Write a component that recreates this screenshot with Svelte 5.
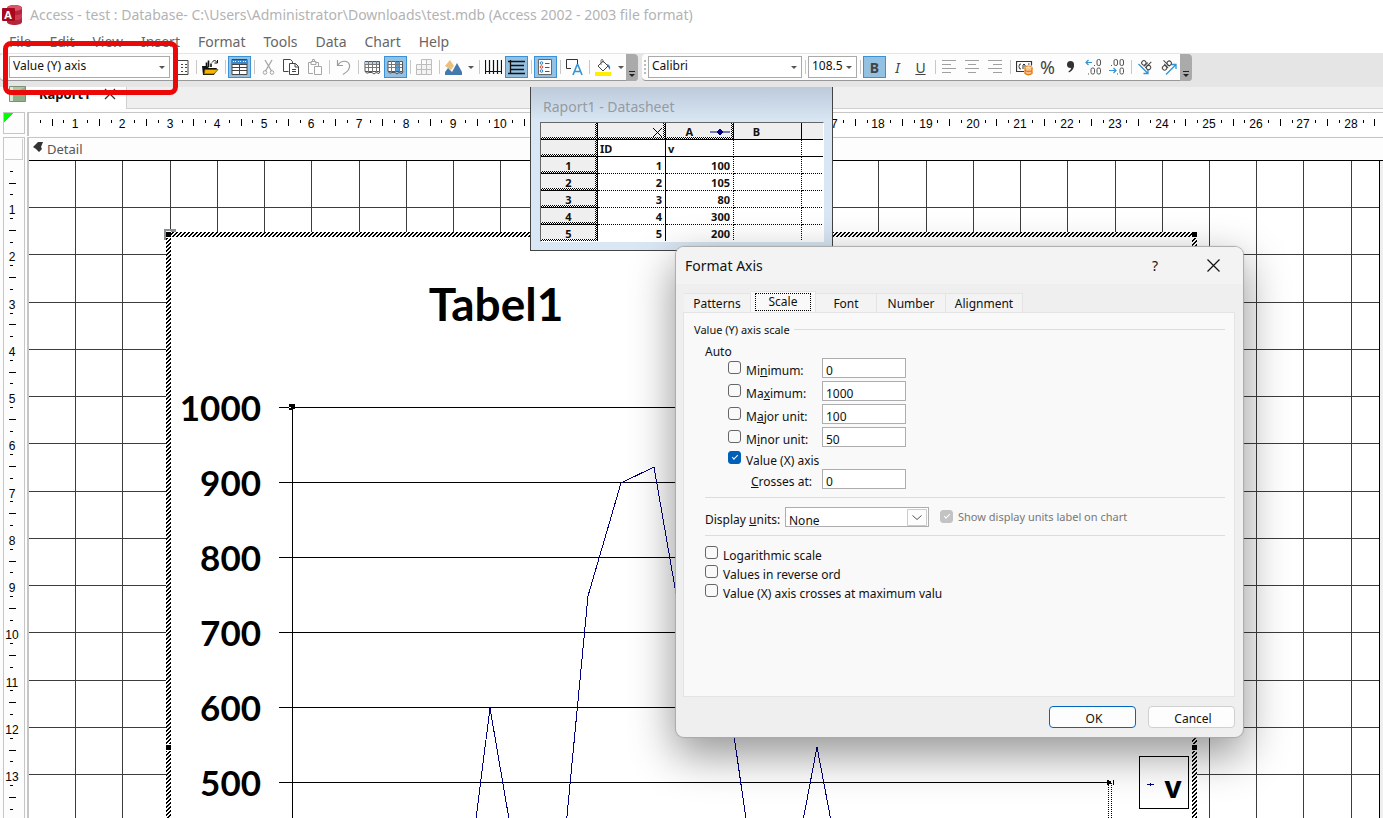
<script>
  const menu = ["File", "Edit", "View", "Insert", "Format", "Tools", "Data", "Chart", "Help"];

  // svg content of the toolbar icons, 17 x 17
  const icons = {
    properties: `<path d="M1 1.500h14v14H1M8 5.500h2M12 5.500h2M8 8.500h2M12 8.500h2M8 12.500h2M12 12.500h2" stroke="#444" fill="none"/>`,
    importFile: `<path d="M0 7h5l2 2h8l-3 7H1z" fill="#111"/><path d="M3 10.500h13L12 15H2z" fill="#f4b400" stroke="#6b4700" stroke-width=".8"/><path d="M4.500 8V3.500M6.500 8V1.500M9 8V4.500" stroke="#111" stroke-width="1.600"/><path d="M10 3.500c2-3 4-2 5 0M15.500 1v3h-3" stroke="#111" fill="none"/>`,
    datasheet: `<path d="M1 .5h15v15H1z" fill="#fff" stroke="#444"/><path d="M1 1h15v4H1z" fill="#3b87c8"/><path d="M2 2.500h3M7 2.500h3M12 2.500h3" stroke="#fff" stroke-dasharray="1 1"/><path d="M1 5.500h15M1 8.500h15M1 11.500h15M8.500 5v10" stroke="#444"/>`,
    cut: `<path d="M5 1l6.500 11M12 1L5.500 12" stroke="#a5a5a5" stroke-width="1.300"/><circle cx="5" cy="13.500" r="1.800" fill="none" stroke="#a5a5a5"/><circle cx="12" cy="13.500" r="1.800" fill="none" stroke="#a5a5a5"/>`,
    copy: `<path d="M5.500 12.500h-5V.5h7l2 2v2" fill="none" stroke="#444"/><path d="M6.500 4.500h6l3 3v8h-9z" fill="#fff" stroke="#444"/><path d="M12 4.500v3.500h3.500M9 10.500h4M9 12.500h4" fill="none" stroke="#444"/>`,
    paste: `<path d="M7 14.500H2.500v-11h3M12.500 7V3.500h-3M5 2.500h5v3H5zM6.500 2V.5h2V2" fill="none" stroke="#a5a5a5"/><path d="M8.500 7.500h7v8h-7z" fill="#fff" stroke="#a5a5a5"/>`,
    undo: `<path d="M2.500 1v5.500h5.500M3 6c3-5 10-5 11.500 0 1 4-4 8-6.500 9.500" fill="none" stroke="#9b9b9b" stroke-width="1.200"/>`,
    byRow: `<path d="M1 2.500h14.500v10H1z" fill="#fff" stroke="#555"/><path d="M1 3h14v3H1z" fill="#b5d3ec"/><path d="M1 5.500h14M1 8.500h14M4.500 2v11M8.500 2v11M12.500 2v11" stroke="#777"/><path d="M1 12.500q2 3 4 1h3l2 1.500 2-1.500 3 1 1-2" fill="none" stroke="#555"/>`,
    byColumn: `<path d="M1 2.500h14.500v10H1z" fill="#fff" stroke="#555"/><path d="M9 3h3v9H9z" fill="#5a9bd0"/><path d="M1 5.500h14M1 8.500h14M4.500 2v11M8.500 2v11M12.500 2v11" stroke="#777"/><path d="M1 12.500q2 3 4 1h3l2 1.500 2-1.500 3 1 1-2" fill="none" stroke="#555"/>`,
    dataTable: `<path d="M5.500.5h10v15H.5v-10h15M.5 10.500h15M5.500.5v15M10.500.5v15" fill="#f4f4f4" stroke="#bdbdbd"/>`,
    chartType: `<path d="M0 7l5-6 4 6-3 4z" fill="#e9c07c"/><path d="M0 16v-3l3-4 4 4 5-9 5 9v3z" fill="#4479ad"/>`,
    gridX: `<path d="M.5 1v14M4.500 1v14M8.500 1v14M12.500 1v14M16.500 1v14M0 12.500h17" stroke="#111" stroke-width="1.200"/>`,
    gridY: `<path d="M2.500 1v14M0 2.500h17M2 6.500h14M2 10.500h14M0 14.500h17" stroke="#111" stroke-width="1.300"/>`,
    legend: `<path d="M1.500.5h13v15h-13z" fill="#fff" stroke="#666"/><circle cx="4.500" cy="4" r="1.300" fill="none" stroke="#2a7ac0"/><circle cx="4.500" cy="8" r="1.300" fill="none" stroke="#cf4a30"/><circle cx="4.500" cy="12" r="1.300" fill="none" stroke="#2a7ac0"/><path d="M8 4.500h4.500M8 8.500h4.500M8 12.500h4.500" stroke="#555"/>`,
    textBox: `<path d="M5 9.500H.5v-9h11v5" fill="none" stroke="#333"/><path d="M7 16l4-10h1l4 10M8.500 12.500h6" fill="none" stroke="#2f94d8" stroke-width="1.600"/>`,
    fill: `<path d="M3 7l5-5 5 5-5 5z" fill="#fff" stroke="#444"/><path d="M6 6V1q1.500-1.500 2 0v3" fill="none" stroke="#777"/><path d="M12 5q4 1 3 6l-2-3z" fill="#3f79b3"/><path d="M0 13h16v4H0z" fill="#ffee00"/>`,
    alignLeft: `<path d="M1 1.500h14M1 5.500h9M1 9.500h14M1 13.500h9" stroke="#a0a0a0"/>`,
    alignCenter: `<path d="M1 1.500h14M4 5.500h8M1 9.500h14M4 13.500h8" stroke="#a0a0a0"/>`,
    alignRight: `<path d="M1 1.500h14M6 5.500h9M1 9.500h14M6 13.500h9" stroke="#a0a0a0"/>`,
    currency: `<path d="M8 12.500H.5v-10h15v4" fill="none" stroke="#333" stroke-width="1.200"/><path d="M5 5q-2-.5-2 2.500t2 2.500M7 10V6q1-2 2 0v2M12 5h1.500" fill="none" stroke="#333"/><ellipse cx="12.500" cy="8.500" rx="3.500" ry="1.500" fill="#fff" stroke="#e17a12"/><path d="M9 8.500v6q3.500 2.500 7 0v-6M9 11.500q3.500 2 7 0" fill="#f8c48c" stroke="#e17a12" stroke-width="1.300"/>`,
    comma: `<circle cx="8.500" cy="5.500" r="3.500" fill="#333"/><path d="M12 5q.5 6-5 8.500l-.6-1Q10 10 9 7z" fill="#333"/>`,
    moreDecimals: `<path d="M7 3.500H1M3.500 1L1 3.500 3.500 6" fill="none" stroke="#2f94d8" stroke-width="1.200"/><g fill="none" stroke="#555"><rect x="12" y=".5" width="3.500" height="6" rx="1.500"/><rect x="6" y="9" width="3.500" height="6" rx="1.500"/><rect x="12" y="9" width="3.500" height="6" rx="1.500"/></g><path d="M9 6h1v1H9zM3 14.500h1v1H3z" fill="#555"/>`,
    lessDecimals: `<path d="M1 11.500h7M5.500 9L8 11.500 5.500 14" fill="none" stroke="#2f94d8" stroke-width="1.200"/><g fill="none" stroke="#555"><rect x="6" y=".5" width="3.500" height="6" rx="1.500"/><rect x="12" y=".5" width="3.500" height="6" rx="1.500"/><rect x="12" y="9" width="3.500" height="6" rx="1.500"/></g><path d="M3 6h1v1H3zM9 14.500h1v1H9z" fill="#555"/>`,
    angleDown: `<path d="M1.500 5l9 9M6.500 14.500h4.500V10" fill="none" stroke="#2f94d8" stroke-width="1.300"/><g transform="rotate(45 9 6)" fill="none" stroke="#444"><circle cx="6" cy="6" r="2.200"/><path d="M8.500 3v5.500M10.500 0v8.500"/><circle cx="12.500" cy="6" r="2.200"/></g>`,
    angleUp: `<path d="M6 15.500l9.500-9.500M11 5.500h5V10" fill="none" stroke="#2f94d8" stroke-width="1.300"/><g transform="rotate(-45 6 6)" fill="none" stroke="#444"><circle cx="3" cy="7" r="2.200"/><path d="M5.500 4v5.500M7.500 1v8.500"/><circle cx="9.500" cy="7" r="2.200"/></g>`
  };

  // "|" is a separator
  const chartTools = [
    "properties", "|", "importFile", "|", "datasheet", "|", "cut", "copy", "paste", "|", "undo", "|",
    "byRow", "byColumn", "|", "dataTable", "|", "chartType", "|", "gridX", "gridY", "|", "legend", "|",
    "textBox", "|", "fill"
  ];
  const pressed = ["datasheet", "byColumn", "gridY", "legend"];
  const withArrow = ["chartType", "fill"];
  const alignTools = ["alignLeft", "alignCenter", "alignRight"];

  const cm = 47.24;
  const mark = (n) => Math.round(n * cm);
  const range = (n) => Array.from({ length: n }, (_, i) => i + 1);
  const quarters = range(160).filter((q) => q % 4);

  const sheet = [100, 105, 80, 300, 200];
  const yAxis = [1000, 900, 800, 700, 600, 500];

  const tabs = ["Patterns", "Scale", "Font", "Number", "Alignment"];
  let activeTab = $state("Scale");

  let scale = $state([
    { id: "min", label: ["Mi", "n", "imum:"], value: "0", auto: false },
    { id: "max", label: ["Ma", "x", "imum:"], value: "1000", auto: false },
    { id: "major", label: ["M", "a", "jor unit:"], value: "100", auto: false },
    { id: "minor", label: ["M", "i", "nor unit:"], value: "50", auto: false }
  ]);
  let crossAuto = $state(true);
  let crossesAt = $state("0");
  const options = ["Logarithmic scale", "Values in reverse ord", "Value (X) axis crosses at maximum valu"];
</script>

{#snippet tool(name)}
  {#if name === "|"}
    <span class="sep"></span>
  {:else}
    <button class="tool" class:on={pressed.includes(name)} class:wide={withArrow.includes(name)} aria-label={name}>
      <svg width="17" height="17" viewBox="0 0 17 17">{@html icons[name]}</svg>
      {#if withArrow.includes(name)}<i class="arrow"></i>{/if}
    </button>
  {/if}
{/snippet}

<div class="app">
  <header class="title">
    <svg width="21" height="22" viewBox="0 0 21 22">
      <path d="M5 4c0-4 15-4 15 0v14c0 4-15 4-15 0z" fill="#b5263c" />
      <ellipse cx="12.500" cy="4" rx="7.500" ry="3" fill="#dc5468" />
      <path d="M5 9c2 3 13 3 15 0v5c-2 3-13 3-15 0z" fill="#cf3a50" />
      <rect y="4" width="13" height="13" rx="1" fill="#a8081d" />
      <text x="6" y="15" text-anchor="middle" class="logo">A</text>
    </svg>
    <span>Access - test : Database- C:\Users\Administrator\Downloads\test.mdb (Access 2002 - 2003 file format)</span>
  </header>

  <nav class="menu">
    {#each menu as item}
      <button>{item}</button>
    {/each}
  </nav>

  <div class="toolbars">
    <div class="bar first">
      <label class="combo object">
        <select aria-label="Chart objects"><option>Value (Y) axis</option></select>
        <i class="arrow"></i>
      </label>
      {#each chartTools as name}
        {@render tool(name)}
      {/each}
      <span class="more"><i class="arrow"></i></span>
    </div>
    <div class="bar">
      <span class="grip"></span>
      <label class="combo family">
        <select aria-label="Font"><option>Calibri</option></select>
        <i class="arrow"></i>
      </label>
      <span class="sep"></span>
      <label class="combo size">
        <select aria-label="Font size"><option>108.5</option></select>
        <i class="arrow"></i>
      </label>
      <span class="sep"></span>
      <button class="tool on"><b>B</b></button>
      <button class="tool"><em>I</em></button>
      <button class="tool"><u>U</u></button>
      <span class="sep"></span>
      {#each alignTools as name}
        {@render tool(name)}
      {/each}
      <span class="sep"></span>
      {@render tool("currency")}
      <button class="tool percent">%</button>
      {#each ["comma", "moreDecimals", "lessDecimals", "|", "angleDown", "angleUp"] as name}
        {@render tool(name)}
      {/each}
      <span class="more"><i class="arrow"></i></span>
    </div>
  </div>

  <main>
    <div class="doc-tabs">
      <button class="doc-tab">
        <svg width="17" height="16" viewBox="0 0 17 16">
          <path d="M.5.5h16v15H.5z" fill="#a9c9a2" stroke="#7c8f78" />
          <path d="M1 1h3v14H1z" fill="#dcebd6" />
          <path d="M4 8l12-7v14H4z" fill="#8fb087" />
        </svg>
        <b>Raport1</b>
        <svg width="12" height="12" viewBox="0 0 12 12"><path d="M1 1l10 10M11 1L1 11" stroke="#333" stroke-width="1.300" /></svg>
      </button>
    </div>

    <div class="design">
      <div class="corner"></div>
      <svg class="ruler-x" shape-rendering="crispEdges">
        {#each quarters as q}
          <rect x={mark(q / 4) - 1} y={q % 2 ? 7 : 6} width="1" height={q % 2 ? 3 : 7} />
        {/each}
        {#each range(28) as n}
          <text x={mark(n) - 1} y="15">{n}</text>
        {/each}
      </svg>

      <div class="side">
        <div class="section-box"></div>
        <svg class="ruler-y" shape-rendering="crispEdges">
          {#each quarters as q}
            <rect x={q % 2 ? 6 : 5} y={mark(q / 4) - 2} width={q % 2 ? 3 : 7} height="1" />
          {/each}
          {#each range(13) as n}
            <text x="8" y={mark(n) + 6}>{n}</text>
          {/each}
        </svg>
      </div>

      <div class="sheet-area">
        <div class="section">
          <svg width="11" height="14" viewBox="0 0 11 14"><path d="M0 5l5-5h5L8 5l1 2-3 3-3-3z" fill="#333" /></svg>
          Detail
        </div>
        <svg class="canvas" shape-rendering="crispEdges">
          <defs>
            <pattern id="hatch" width="4" height="4" patternUnits="userSpaceOnUse">
              <rect width="4" height="4" fill="#fff" />
              <path d="M3 0h1v1h-1zM2 0h1v1h-1zM2 1h1v1h-1zM1 1h1v1h-1zM1 2h1v1h-1zM0 2h1v1h-1zM0 3h1v1h-1zM3 3h1v1h-1z" />
            </pattern>
          </defs>
          <rect class="paper" width="1351" height="100%" />
          {#each range(28) as n}
            <rect class="grid" x={mark(n) - 1} y="0" width="1" height="100%" />
          {/each}
          {#each range(30) as n}
            <rect class="grid" x="0" y={mark(n) - 1} width="1350" height="1" />
          {/each}
          <rect x="1350" width="1" height="100%" />

          <!-- the chart object and its selection frame -->
          <path d="M136 79V69h11" fill="none" stroke="#8b8f96" stroke-width="3" />
          <rect x="137" y="71" width="1031" height="1026" fill="url(#hatch)" />
          <rect class="paper" x="142" y="76" width="1021" height="1016" />
          {#each [[137, 71], [1163, 71], [137, 584], [1163, 584]] as [x, y]}
            <rect class="paper" {x} y={y - 1} width="5" height="7" />
            <rect {x} {y} width="5" height="5" />
          {/each}

          <text class="chart-title" x="467" y="160">Tabel1</text>
          {#each yAxis as value, i}
            <text class="axis" x="232" y={260 + i * 75}>{value}</text>
            <rect x="250" y={246 + i * 75} width="832" height="1" />
          {/each}
          <rect x="263" y="246" width="1" height="850" />
          <path d="M260 243h6v6h-6z" />
          <path d="M260 246h2v1h-2zM264 248h2v1h-2z" fill="#fff" />
          <polyline
            class="series"
            points="429,800 461,547 494,740 527,770 559,435 592,322 625,306 657,490 690,470 723,700 755,760 788,586 821,760" />
          <path d="M1079.500 622v400M1082.500 622v400" stroke="#000" stroke-dasharray="1 1" />
          <path d="M1078 619h2v1h2v3h-2v1h-2zM1084 619h1v5h-1z" />
          <rect x="1110.500" y="595.500" width="49" height="52" fill="none" stroke="#000" />
          <path d="M1118 623h7v1h-7zM1121 622h1v3h-1z" fill="#000080" />
          <text class="legend" x="1144" y="637">v</text>
        </svg>
      </div>
    </div>
  </main>

  <section class="datasheet">
    <h2>Raport1 - Datasheet</h2>
    <div class="table-box">
      <table>
        <thead>
          <tr>
            <th class="row-head"></th>
            <th class="off"><svg width="9" height="9" viewBox="0 0 9 9"><path d="M0 0l9 9M9 0L0 9" stroke="#000" /></svg></th>
            <th class="off series-a">A<svg width="20" height="8" viewBox="0 0 20 8"><path d="M0 4h20M7 4l3-3 3 3-3 3z" fill="#000080" stroke="#000080" /></svg></th>
            <th class="b">B</th>
            <th class="c"></th>
          </tr>
        </thead>
        <tbody>
          <tr class="names"><th></th><td>ID</td><td>v</td><td></td><td></td></tr>
          {#each sheet as value, i}
            <tr><th>{i + 1}</th><td>{i + 1}</td><td>{value}</td><td></td><td></td></tr>
          {/each}
        </tbody>
      </table>
    </div>
  </section>

  <div class="dialog" role="dialog" aria-labelledby="dialog-title">
    <header>
      <h1 id="dialog-title">Format Axis</h1>
      <button aria-label="Help">?</button>
      <button aria-label="Close"><svg width="13" height="13" viewBox="0 0 13 13"><path d="M.5.5l12 12M12.500.5l-12 12" stroke="#111" stroke-width="1.200" /></svg></button>
    </header>
    <div class="tabs" role="tablist">
      {#each tabs as tab}
        <button role="tab" class={tab.toLowerCase()} aria-selected={activeTab === tab} onclick={() => (activeTab = tab)}>
          <span>{tab}</span>
        </button>
      {/each}
    </div>
    <div class="panel">
      <h3>Value (Y) axis scale</h3>
      <div class="fields">
        <p>Auto</p>
        {#each scale as row}
          <div class="row">
            <input type="checkbox" id={"auto-" + row.id} bind:checked={row.auto} />
            <label for={"auto-" + row.id}>{row.label[0]}<u>{row.label[1]}</u>{row.label[2]}</label>
            <input type="text" aria-label={row.label.join("")} bind:value={row.value} />
          </div>
        {/each}
        <div class="row short">
          <input type="checkbox" id="cross-auto" bind:checked={crossAuto} />
          <label for="cross-auto">Value (X) axis</label>
        </div>
        <div class="row cross">
          <label for="crosses"><u>C</u>rosses at:</label>
          <input type="text" id="crosses" bind:value={crossesAt} />
        </div>
      </div>
      <div class="units">
        <label for="units">Display <u>u</u>nits:</label>
        <span class="drop">
          <select id="units"><option>None</option></select>
          <svg width="20" height="17" viewBox="0 0 20 17"><path d="M.5.5h19v16H.5z" fill="#fdfdfd" stroke="#ccc" /><path d="M5.500 6.500l4.500 4 4.500-4" fill="none" stroke="#555" /></svg>
        </span>
        <input type="checkbox" id="unit-label" checked disabled />
        <label class="disabled" for="unit-label">Show display units label on chart</label>
      </div>
      <div class="options">
        {#each options as option, i}
          <div class="row">
            <input type="checkbox" id={"option-" + i} />
            <label for={"option-" + i}>{option}</label>
          </div>
        {/each}
      </div>
    </div>
    <footer>
      <button class="ok">OK</button>
      <button>Cancel</button>
    </footer>
  </div>

  <div class="highlight"></div>
</div>

<style>
  :global(body) {
    overflow: hidden;
    background: #fff;
  }
  .app {
    position: relative;
    display: flex;
    flex-direction: column;
    height: 100vh;
    overflow: hidden;
    font: 12px "Noto Sans", sans-serif;
    color: #111;
  }
  button,
  input,
  select {
    margin: 0;
    padding: 0;
    border: 0;
    background: none;
    font: inherit;
    color: inherit;
  }
  svg {
    display: block;
    flex: none;
  }

  .title {
    display: flex;
    align-items: center;
    gap: 7px;
    height: 29px;
    padding-left: 2px;
    font-size: 14px;
    color: #b3b3b3;
    white-space: nowrap;
  }
  .logo {
    font: bold 11px "Open Sans", sans-serif;
    fill: #fff;
  }
  .menu {
    display: flex;
    gap: 18px;
    height: 24px;
    padding-left: 9px;
    font-size: 14px;
    color: #666;
  }

  .toolbars {
    display: flex;
    gap: 4px;
    height: 34px;
    background: #e5e5e5;
  }
  .bar {
    display: flex;
    align-items: center;
    height: 26px;
    margin-top: 1px;
    background: #fdfdfd;
    border-bottom: 1px solid #999;
    border-radius: 4px;
  }
  .first {
    padding-left: 9px;
  }
  .combo {
    position: relative;
    height: 20px;
    border: 1px solid #aaa;
    background: #fff;
  }
  .combo select {
    display: block;
    appearance: none;
    width: 100%;
    height: 18px;
    padding: 0 0 1px 3px;
    color: #111;
  }
  .object {
    width: 159px;
  }
  .family {
    width: 152px;
  }
  .size {
    width: 47px;
  }
  .arrow {
    border: 3px solid transparent;
    border-top-color: #555;
    border-bottom: 0;
  }
  .combo .arrow {
    position: absolute;
    right: 4px;
    top: 9px;
  }
  .sep {
    width: 1px;
    height: 14px;
    margin: 0 2px 0 3px;
    background: #c8c8c8;
  }
  .tool {
    display: flex;
    align-items: center;
    justify-content: center;
    box-sizing: border-box;
    width: 23px;
    height: 22px;
    font-size: 14px;
    color: #444;
  }
  .tool.on {
    border: 1px solid #3a91d6;
    background: #94c0e2;
  }
  .wide {
    gap: 6px;
    width: 34px;
  }
  .percent {
    font-size: 18px;
  }
  .more {
    display: flex;
    align-items: flex-end;
    justify-content: center;
    align-self: stretch;
    width: 12px;
    padding-bottom: 4px;
    margin-bottom: -1px;
    border-radius: 0 4px 4px 0;
    background: #aaa;
    box-sizing: border-box;
  }
  .more .arrow {
    border-top-color: #222;
    box-shadow: 0 -2px #aaa, 0 -3px #222;
  }
  .grip {
    width: 2px;
    height: 14px;
    margin: 0 2px;
    background: repeating-linear-gradient(#bbb 0 2px, transparent 2px 4px);
  }

  main {
    display: flex;
    flex: 1;
    flex-direction: column;
    min-height: 0;
  }
  .doc-tabs {
    height: 21px;
    border-bottom: 1px solid #d0d0d0;
    background: #efefef;
  }
  .doc-tab {
    display: flex;
    align-items: center;
    gap: 13px;
    height: 22px;
    padding: 0 10px 8px 9px;
    border-right: 1px solid #d0d0d0;
    background: #fff;
    font-size: 13px;
  }
  .design {
    display: grid;
    flex: 1;
    grid-template: 25px 1fr / 22px 1fr;
    column-gap: 2px;
    min-height: 0;
    padding: 3px 0 0 3px;
    background: #fdfdfd;
  }
  .corner {
    height: 20px;
    border: 1px solid #c6c6c6;
    background: linear-gradient(135deg, #0f0 7px, #fdfdfd 7px);
  }
  .ruler-x {
    width: 100%;
    height: 24px;
    border-top: 1px solid #c6c6c6;
    border-left: 2px solid #c6c6c6;
    background: #fff;
    box-sizing: border-box;
  }
  .ruler-x text,
  .ruler-y text {
    font: 12px "Liberation Sans", sans-serif;
    text-anchor: middle;
  }
  .side {
    display: flex;
    flex-direction: column;
    min-height: 0;
    border: 1px solid #c6c6c6;
    border-bottom: 0;
  }
  .section-box {
    height: 20px;
    margin: 1px;
    border: 1px solid #ccc;
    border-width: 0 1px 1px 0;
  }
  .ruler-y {
    flex: 1;
    width: 100%;
    min-height: 0;
  }
  .sheet-area {
    display: flex;
    flex-direction: column;
    min-width: 0;
    min-height: 0;
    border-top: 1px solid #c6c6c6;
    border-left: 2px solid #c6c6c6;
  }
  .section {
    display: flex;
    align-items: center;
    gap: 3px;
    height: 22px;
    padding-left: 4px;
    border-bottom: 1px solid #000;
    font-size: 13px;
    line-height: 24px;
    color: #555;
  }
  .canvas {
    flex: 1;
    width: 100%;
    min-height: 0;
    background: #efefef;
  }
  .paper {
    fill: #fff;
  }
  .grid {
    fill: #3c3c3c;
  }
  .canvas text {
    font-family: Lato, sans-serif;
    font-weight: bold;
  }
  .chart-title {
    font-size: 46px;
    text-anchor: middle;
  }
  .axis {
    font-size: 35px;
    text-anchor: end;
  }
  .canvas .legend {
    font: bold 30px "Open Sans", sans-serif;
    text-anchor: middle;
  }
  .series {
    fill: none;
    stroke: #000080;
  }

  .datasheet {
    position: absolute;
    top: 87px;
    left: 530px;
    width: 284px;
    padding: 0 8px 8px 9px;
    border: 1px solid #444;
    border-top: 0;
    background: linear-gradient(#bccadb, #d9e6f3 34px);
  }
  h1,
  h2,
  h3,
  p {
    margin: 0;
    font-weight: normal;
  }
  .datasheet h2 {
    padding-left: 3px;
    font-size: 14px;
    line-height: 39px;
    height: 35px;
    color: #959ba3;
  }
  .table-box {
    height: 118px;
    overflow: hidden;
    border: 1px solid #666;
    border-color: #666 #fff #fff #666;
    background: #fff;
  }
  table {
    width: 329px;
    border-collapse: separate;
    border-spacing: 0;
    table-layout: fixed;
    font: bold 11px "Noto Sans", sans-serif;
  }
  .row-head {
    width: 57px;
  }
  td,
  th {
    height: 17px;
    padding: 2px 3px 0 2px;
    border-right: 1px solid #000;
    border-bottom: 1px dotted #000;
    box-sizing: border-box;
    text-align: right;
    line-height: 14px;
  }
  th {
    border-bottom: 1px solid #000;
    background: #efefef;
    text-align: center;
  }
  thead th,
  .names td {
    border-bottom: 1px solid #000;
  }
  .names td {
    text-align: left;
  }
  td:nth-child(n + 4),
  td:nth-child(3) {
    border-right-style: dotted;
  }
  /* raised header cells with a dithered edge on the right and bottom */
  tbody th,
  thead th.row-head,
  thead th.off {
    background:
      linear-gradient(#efefef, #efefef) 0 0 / calc(100% - 2px) calc(100% - 2px) no-repeat,
      repeating-conic-gradient(#000 0 25%, #fff 0 50%) 0 0 / 2px 2px;
  }
  tbody th {
    padding-top: 1px;
  }
  thead .off {
    padding-right: 3px;
  }
  .off svg {
    margin-left: auto;
  }
  .series-a svg {
    display: inline-block;
    margin-left: 17px;
  }
  thead .series-a {
    text-align: right;
  }
  thead .b {
    padding-right: 24px;
  }

  .dialog {
    position: absolute;
    top: 247px;
    left: 676px;
    width: 567px;
    border-radius: 8px;
    background: #efefef;
    box-shadow: 0 0 1px 1px #aaa, 0 16px 44px 2px rgba(0, 0, 0, 0.42);
  }
  .dialog header {
    display: flex;
    align-items: center;
    height: 37px;
    padding: 0 1px 0 9px;
    border-radius: 8px 8px 0 0;
    background: #f3f3f3;
  }
  h1 {
    flex: 1;
    font-size: 14px;
  }
  .dialog header button {
    display: flex;
    justify-content: center;
    width: 58px;
    font-size: 14px;
  }
  .tabs {
    display: flex;
    align-items: flex-end;
    height: 28px;
    padding-left: 8px;
  }
  .tabs button {
    height: 19px;
    border: 1px solid #e4e4e4;
    border-width: 1px 1px 0 0;
    background: #f3f3f3;
    box-sizing: border-box;
    line-height: 20px;
  }
  .tabs button[aria-selected="true"] {
    height: 21px;
    background: #f9f9f9;
  }
  .tabs button[aria-selected="true"] span {
    display: block;
    margin: 0 4px;
    border: 1px dotted #000;
    line-height: 16px;
  }
  .tabs .patterns {
    width: 67px;
  }
  .tabs .scale {
    width: 65px;
  }
  .tabs .font {
    width: 61px;
  }
  .tabs .number {
    width: 69px;
  }
  .tabs .alignment {
    width: 77px;
  }
  .panel {
    height: 375px;
    margin: 0 8px 0 7px;
    padding: 8px 9px 0 10px;
    border: 1px solid #e4e4e4;
    background: #f9f9f9;
  }
  h3 {
    display: flex;
    align-items: center;
    gap: 4px;
    height: 16px;
    font-size: 11px;
  }
  h3::after {
    content: "";
    flex: 1;
    height: 1px;
    background: #dcdcdc;
  }
  .fields {
    margin-left: 11px;
    padding: 5px 0 8px;
    border-bottom: 1px solid #dcdcdc;
  }
  .fields p {
    height: 16px;
    line-height: 20px;
  }
  .row {
    display: flex;
    align-items: flex-start;
    height: 20px;
  }
  .fields .row {
    margin: 0 0 3px 23px;
  }
  .row label {
    padding: 5px 0 0 5px;
    line-height: 16px;
    white-space: nowrap;
  }
  .fields .row label {
    width: 76px;
  }
  .fields .short {
    height: 19px;
    margin-bottom: 0;
  }
  .fields .short label {
    padding-top: 3px;
    width: auto;
  }
  .fields .cross {
    margin: 0 0 0 46px;
  }
  .fields .cross label {
    width: 71px;
    padding-left: 0;
  }
  input[type="text"] {
    width: 84px;
    height: 20px;
    padding: 5px 3px 0;
    border: 1px solid #adadb0;
    background: #fff;
    box-sizing: border-box;
  }
  input[type="checkbox"] {
    flex: none;
    appearance: none;
    box-sizing: border-box;
    width: 13px;
    height: 13px;
    margin-top: 3px;
    border: 1px solid #666;
    border-radius: 3px;
    background: #f9f9f9;
  }
  input[type="checkbox"]:checked {
    display: grid;
    place-items: center;
    border-color: #005fb8;
    background: #005fb8;
  }
  input[type="checkbox"]:checked::before {
    content: "";
    width: 5px;
    height: 2px;
    margin-bottom: 2px;
    border: 1px solid #fff;
    border-width: 0 0 1px 1px;
    transform: rotate(-45deg);
  }
  .fields .short input[type="checkbox"] {
    margin-top: 1px;
  }
  input[type="checkbox"]:disabled {
    border-color: #c3c3c3;
    background: #c3c3c3;
  }
  .units {
    display: flex;
    margin-left: 11px;
    padding: 9px 0 8px;
    border-bottom: 1px solid #dcdcdc;
  }
  .units label:first-child {
    width: 80px;
    padding-top: 5px;
    line-height: 15px;
    white-space: nowrap;
  }
  .drop {
    position: relative;
    width: 144px;
    height: 20px;
    margin-right: 11px;
  }
  .drop select {
    appearance: none;
    width: 100%;
    height: 20px;
    padding: 4px 0 0 3px;
    border: 1px solid #adadb0;
    background: #fff;
    box-sizing: border-box;
  }
  .drop svg {
    position: absolute;
    top: 2px;
    right: 2px;
    pointer-events: none;
  }
  .units .disabled {
    padding-left: 5px;
    font-size: 11px;
    line-height: 20px;
    color: #777;
  }
  .options {
    margin-left: 11px;
    padding-top: 7px;
  }
  .options .row {
    height: 19px;
  }
  .dialog footer {
    display: flex;
    justify-content: flex-end;
    gap: 12px;
    padding: 9px 8px;
  }
  footer button {
    width: 87px;
    height: 22px;
    padding: 4px 0 0 3px;
    border: 1px solid #d0d0d0;
    border-radius: 4px;
    background: #fdfdfd;
    box-sizing: border-box;
    line-height: 16px;
  }
  .ok {
    border-color: #0067c0;
  }

  .highlight {
    position: absolute;
    top: 41px;
    left: 3px;
    width: 165px;
    height: 44px;
    border: 5px solid #eb0808;
    border-radius: 8px;
    pointer-events: none;
  }
</style>
